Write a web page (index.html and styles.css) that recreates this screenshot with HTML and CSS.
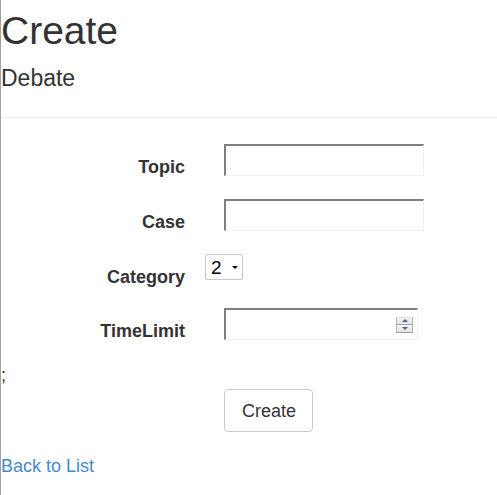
FILE: index.html
```html
<!DOCTYPE html>
<html>
<head>
<meta charset="utf-8">
<title>Create</title>
<link rel="stylesheet" href="styles.css">
</head>
<body>
<div class="page">
  <h1 class="title">Create</h1>
  <h2 class="subtitle">Debate</h2>
  <hr class="divider">
  <form class="form">
    <div class="form-group">
      <label class="control-label" for="Topic">Topic</label>
      <div class="controls"><input class="form-control" id="Topic" type="text"></div>
    </div>
    <div class="form-group">
      <label class="control-label" for="Case">Case</label>
      <div class="controls"><input class="form-control" id="Case" type="text"></div>
    </div>
    <div class="form-group group-select">
      <label class="control-label" for="Category">Category</label>
      <div class="controls">
        <span class="select-wrap"><select class="select" id="Category"><option>2</option></select></span>
      </div>
    </div>
    <div class="form-group">
      <label class="control-label" for="TimeLimit">TimeLimit</label>
      <div class="controls">
        <div class="number-box">
          <input class="number-input" id="TimeLimit" type="text">
          <span class="spinner">
            <span class="spin spin-up"><span class="tri-up"></span></span>
            <span class="spin spin-down"><span class="tri-down"></span></span>
          </span>
        </div>
      </div>
    </div>
    <div class="stray">;</div>
    <div class="actions"><button class="btn" type="button">Create</button></div>
  </form>
  <div class="back"><a class="back-link" href="#">Back to List</a></div>
</div>
</body>
</html>
```
FILE: styles.css
```css
html, body {
  margin: 0;
  padding: 0;
}
body {
  border-left: 1px solid #a0a0a0;
  min-height: 495px;
  box-sizing: border-box;
  font-family: "Liberation Sans", Arial, sans-serif;
  color: #333;
  background: #fff;
  overflow: hidden;
}
.page {
  display: flex;
  flex-direction: column;
}
.title {
  margin: 9px 0 0;
  font-size: 39px;
  line-height: 44px;
  font-weight: normal;
  color: #333;
}
.subtitle {
  margin: 12px 0 0;
  font-size: 23px;
  line-height: 26px;
  font-weight: normal;
  color: #333;
}
.divider {
  margin: 26px 0 0;
  border: 0;
  border-top: 1px solid #eee;
  height: 0;
}
.form {
  margin: 0;
  padding-top: 26px;
  display: flex;
  flex-direction: column;
}
.form-group {
  display: flex;
  align-items: flex-start;
  height: 55px;
}
.group-select {
  height: 54px;
}
.control-label {
  width: 184px;
  text-align: right;
  font-weight: bold;
  font-size: 18px;
  line-height: 20px;
  padding-top: 13px;
  color: #333;
}
.controls {
  padding-left: 20px;
  display: flex;
}
.form-control {
  margin: 0 0 0 19px;
  width: 200px;
  height: 32px;
  box-sizing: border-box;
  border-style: solid;
  border-width: 2px 1px 1px 2px;
  border-color: #808080 #f0f0f0 #f0f0f0 #808080;
  background: #fff;
  padding: 0 4px;
  font-family: inherit;
  font-size: 16px;
  outline: none;
}
.select-wrap {
  position: relative;
  display: inline-block;
}
.select {
  -webkit-appearance: none;
  appearance: none;
  width: 38px;
  height: 26px;
  box-sizing: border-box;
  border: 1px solid #c9c9c9;
  border-radius: 2px;
  background: #fff;
  color: #000;
  font-family: inherit;
  font-size: 19px;
  padding: 0 0 0 5px;
  margin: 0;
  outline: none;
}
.select-wrap::after {
  content: "";
  position: absolute;
  left: 27px;
  top: 12px;
  width: 0;
  height: 0;
  border-left: 3px solid transparent;
  border-right: 3px solid transparent;
  border-top: 3px solid #000;
  pointer-events: none;
}
.number-box {
  margin-left: 19px;
  width: 194px;
  height: 32px;
  box-sizing: border-box;
  border-style: solid;
  border-width: 2px 1px 1px 2px;
  border-color: #808080 #f0f0f0 #f0f0f0 #808080;
  background: #fff;
  display: flex;
  align-items: center;
  padding-right: 4px;
}
.number-input {
  flex: 1;
  min-width: 0;
  height: 100%;
  border: 0;
  padding: 0 4px;
  margin: 0;
  outline: none;
  background: transparent;
  font-family: inherit;
  font-size: 16px;
}
.spinner {
  width: 17px;
  height: 16px;
  display: flex;
  flex-direction: column;
  box-sizing: border-box;
  border: 1px solid #b4b4b4;
  border-top-color: #e2e2e2;
  border-bottom-color: #9a9a9a;
}
.spin {
  flex: 1;
  display: flex;
  align-items: center;
  justify-content: center;
  background: linear-gradient(#f4f4f4, #e3e3e3);
}
.spin-up {
  border-bottom: 1px solid #a8a8a8;
}
.tri-up {
  width: 0;
  height: 0;
  border-left: 3px solid transparent;
  border-right: 3px solid transparent;
  border-bottom: 3px solid #4a5fa8;
}
.tri-down {
  width: 0;
  height: 0;
  border-left: 3px solid transparent;
  border-right: 3px solid transparent;
  border-top: 3px solid #4a5fa8;
}
.stray {
  margin-top: 2px;
  font-size: 18px;
  line-height: 20px;
  color: #333;
}
.actions {
  margin-top: 4px;
  padding-left: 223px;
  display: flex;
}
.btn {
  margin: 0;
  background: #fff;
  border: 1px solid #ccc;
  border-radius: 4px;
  color: #333;
  font-family: inherit;
  font-size: 18px;
  line-height: 21px;
  padding: 11px 16px 9px 17px;
  cursor: pointer;
}
.back {
  margin-top: 24px;
  font-size: 18px;
  line-height: 20px;
}
.back-link {
  color: #428bca;
  text-decoration: none;
}
```
